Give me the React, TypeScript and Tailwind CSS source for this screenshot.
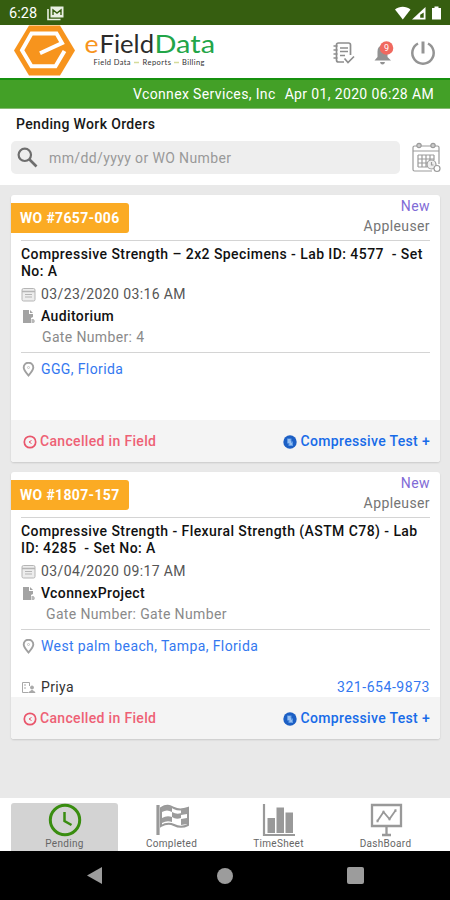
import type { ReactNode } from 'react'
import clsx from 'clsx'

type WorkOrder = {
  number: string
  status: string
  user: string
  title: string[]
  date: string
  project: string
  gate: string
  gateIndent: string
  address: string
  contact?: { name: string; phone: string }
}

const orders: WorkOrder[] = [
  {
    number: 'WO #7657-006',
    status: 'New',
    user: 'Appleuser',
    title: ['Compressive Strength – 2x2 Specimens - Lab ID: 4577  - Set', 'No: A'],
    date: '03/23/2020 03:16 AM',
    project: 'Auditorium',
    gate: 'Gate Number: 4',
    gateIndent: 'pl-[21px]',
    address: 'GGG, Florida',
  },
  {
    number: 'WO #1807-157',
    status: 'New',
    user: 'Appleuser',
    title: ['Compressive Strength - Flexural Strength (ASTM C78) - Lab', 'ID: 4285  - Set No: A'],
    date: '03/04/2020 09:17 AM',
    project: 'VconnexProject',
    gate: 'Gate Number: Gate Number',
    gateIndent: 'pl-[25px]',
    address: 'West palm beach, Tampa, Florida',
    contact: { name: 'Priya', phone: '321-654-9873' },
  },
]

export default function App() {
  return (
    <div className="flex h-[900px] w-[450px] flex-col overflow-hidden bg-[#e9e9e9] font-['Roboto',sans-serif] text-[14px]">
      <StatusBar />
      <Header />
      <div className="flex h-[30px] items-center justify-end gap-[9px] border-t-2 border-[#16910f] bg-[#43a027] pr-4 tracking-[0.36px] text-white">
        <span>Vconnex Services, Inc</span>
        <span>Apr 01, 2020 06:28 AM</span>
      </div>
      <Search />
      <main className="flex flex-1 flex-col gap-[10px] pl-[11px] pr-[10px] pt-[10px]">
        {orders.map((o) => <OrderCard key={o.number} order={o} />)}
      </main>
      <TabBar />
      <SystemNav />
    </div>
  )
}

function StatusBar() {
  return (
    <div className="flex h-[25px] items-center bg-[#365e10] pl-[9px] pr-[7px] text-white">
      <span className="pt-[3px] text-[14.5px] leading-none tracking-[0.1px]">6:28</span>
      <svg width="18" height="16" viewBox="0 0 18 16" className="ml-[10px] mt-px">
        <path d="M3.5 1.5h13v11h-13z" fill="#e9efe2" />
        <path d="M1 4v10.500h12.500" fill="none" stroke="#e9efe2" strokeWidth="1.600" />
        <path d="M6 10V5l4 3 4-3v5" fill="none" stroke="#365e10" strokeWidth="1.400" />
      </svg>
      <svg width="49" height="16" viewBox="0 0 49 16" className="ml-auto mt-px">
        <path d="M1 4.500C5.500 0.800 12 0.800 16.500 4.500L8.800 14.500z" fill="#fff" />
        <path d="M31.500 2v12.500H18z" fill="#fff" />
        <path d="M29.700 7.500v5.300h-3.500v-3z" fill="#365e10" />
        <path d="M38 3h2.500V1.500h4V3H47v11.500h-9z" fill="#fff" />
      </svg>
    </div>
  )
}

function Header() {
  return (
    <header className="flex h-[53px] items-start bg-white pl-[13px] pr-[14px]">
      <svg width="204" height="53" viewBox="13 25 204 53">
        <path d="M29 25.500H60L75 50.500L60 75.500H29L14 50.500z" fill="#f7941d" />
        <path d="M40 53.300L62 43L56.500 33.500H31.500L22 50.300L31.500 66.300H55.500L64.500 51" fill="none" stroke="#fff" strokeWidth="4" />
        <g fontFamily="Lato" fontSize="25.500">
          <text x="84.500" y="53" fill="#f7941d" textLength="14" lengthAdjust="spacingAndGlyphs">e</text>
          <text x="99.500" y="53" fill="#2b2b2b" textLength="54.500" lengthAdjust="spacingAndGlyphs">Field</text>
          <text x="154.500" y="53" fill="#22a548" textLength="60.500" lengthAdjust="spacingAndGlyphs">Data</text>
        </g>
        <g fontFamily="Lato" fontSize="7.500" fill="#333">
          <text x="93.500" y="65" textLength="37">Field Data</text>
          <text x="142.500" y="65" textLength="28.500">Reports</text>
          <text x="182" y="65" textLength="22.500">Billing</text>
        </g>
        <path d="M134 62.500h5M174 62.500h5" stroke="#d5dc9a" strokeWidth="1.300" />
      </svg>
      <div className="ml-auto flex pt-[14px]">
        <svg width="24" height="26" viewBox="0 0 24 26" fill="none" stroke="#8e8e8e" strokeWidth="1.700">
          <path d="M18.500 16V6q0-2-2-2H6.500q-2 0-2 2v15q0 2 2 2H12" />
          <path d="M1.500 7h4M1.500 11h4M1.500 15h4M1.500 19h4" strokeWidth="1.300" />
          <path d="M8 9h8M8 12.500h8M8 16.500h5M12.500 19.500l3.500 4 6-6" />
        </svg>
        <svg width="22" height="27" viewBox="0 0 22 27" className="ml-[17px]">
          <path d="M1.500 21.500l3-3.500v-5.500q0-5.500 5-6.500 4.500 1 5 6.500V18l3.500 3.500z" fill="#929292" />
          <path d="M7 23h5q-.5 2.500-2.500 2.500T7 23z" fill="#929292" />
          <circle cx="13.500" cy="9" r="6.800" fill="#f0695f" />
          <text x="13.500" y="12.200" textAnchor="middle" fontSize="9" fontFamily="Roboto" fill="#fff">9</text>
        </svg>
        <svg width="26" height="28" viewBox="0 0 26 28" fill="none" stroke="#949494" strokeWidth="2.500" className="ml-[15px]">
          <path d="M8 4.500a10.700 10.700 0 1 0 10 0" />
          <path d="M13 2.500v12" strokeWidth="3" />
        </svg>
      </div>
    </header>
  )
}

function Search() {
  return (
    <section className="h-[77px] border-t border-[#86bb73] bg-white pl-[11px] pr-[9px]">
      <h1 className="mt-[5px] pl-[5px] text-[14px] font-medium leading-5 tracking-[0.35px] text-[#181818]">Pending Work Orders</h1>
      <div className="mt-[7px] flex items-center justify-between">
        <label className="flex h-[33px] w-[389px] items-center rounded-[5px] bg-[#eeeeee] pl-[6px]">
          <svg width="21" height="21" viewBox="0 0 21 21" fill="none" stroke="#6e6e6e" strokeWidth="2.200">
            <circle cx="7.800" cy="7.800" r="6.200" />
            <path d="M12.500 12.500l7 7" strokeWidth="2.600" />
          </svg>
          <span className="ml-[11px] pt-[2px] tracking-[0.38px] text-[#999]">mm/dd/yyyy or WO Number</span>
        </label>
        <svg width="30" height="31" viewBox="0 0 30 31" fill="none" stroke="#9b9b9b" strokeWidth="1.200">
          <path d="M28 22V5.500Q28 4 26.500 4h-23Q2 4 2 5.500v22Q2 29 3.500 29H21M2 9h26" />
          <circle cx="8" cy="3.500" r="2.200" fill="#ccc" />
          <circle cx="22" cy="3.500" r="2.200" fill="#ccc" />
          <path d="M7 13h16M7 17h16M7 21h10M7 25h9M7 13v12M11 13v12M15 13v12M19 13v5M23 13v5" />
          <circle cx="20.500" cy="22.500" r="4.500" fill="#eee" />
          <path d="M20.500 20v3h2" />
          <circle cx="26" cy="26.500" r="3" fill="#fff" />
        </svg>
      </div>
    </section>
  )
}

function OrderCard({ order }: { order: WorkOrder }) {
  return (
    <article className="flex h-[267px] flex-col rounded-[3px] bg-white shadow-[0_1px_2px_rgba(0,0,0,0.14)]">
      <div className="flex h-[45px] justify-between pr-[10px]">
        <span className="mt-2 flex h-[30px] w-[118px] items-center rounded-r-[3px] bg-[#fbab24] pl-[9px] pt-px font-bold tracking-[0.35px] text-white">
          {order.number}
        </span>
        <div className="pt-px text-right leading-[20px] tracking-[0.4px]">
          <p className="text-[#7f6bd6]">{order.status}</p>
          <p className="text-[#757575]">{order.user}</p>
        </div>
      </div>
      <div className="mx-[10px] border-t border-[#d4d4d4]" />
      <div className="px-[10px]">
        <div className="whitespace-pre pt-[5px] font-medium leading-[17px] tracking-[0.43px] text-[#111]">
          {order.title.map((line) => <p key={line}>{line}</p>)}
        </div>
        <Row icon={<CalendarIcon />} className="mt-[4px] text-[#555]">{order.date}</Row>
        <Row icon={<ProjectIcon />} className="font-medium text-[#111]">{order.project}</Row>
        <p className={clsx('leading-[21.5px] tracking-[0.36px] text-[#8a8a8a]', order.gateIndent)}>{order.gate}</p>
      </div>
      <div className="mx-[10px] mt-[3px] border-t border-[#d4d4d4]" />
      <div className="px-[10px] pt-[6px]">
        <Row icon={<PinIcon />} className="text-[#3478f0]">{order.address}</Row>
      </div>
      {order.contact && (
        <div className="mt-auto flex h-[19px] items-center justify-between px-[10px]">
          <Row icon={<ContactIcon />} className="text-[#333]">{order.contact.name}</Row>
          <span className="tracking-[0.55px] text-[#3478f0]">{order.contact.phone}</span>
        </div>
      )}
      <footer className={clsx('flex h-[42px] items-center justify-between rounded-b-[3px] bg-[#f4f4f4] pl-3 pr-[10px] pt-px font-medium tracking-[0.33px]', !order.contact && 'mt-auto')}>
        <span className="flex items-center gap-[3px] text-[#ee6175]">
          <svg width="14" height="14" viewBox="0 0 14 14" fill="none" stroke="#e9556b" strokeWidth="1.700">
            <circle cx="7" cy="7" r="5.700" />
            <path d="M8.500 5.500L6 7l2.500 1.500" strokeWidth="1" />
          </svg>
          Cancelled in Field
        </span>
        <span className="flex items-center gap-[4px] text-[#176be8]">
          <svg width="14" height="14" viewBox="0 0 14 14">
            <circle cx="7" cy="7" r="6.700" fill="#1c5fc4" />
            <path d="M4 3.500h4.500v3H10V11H5.500V8.500H4z" fill="#5f9be6" />
            <path d="M5 5h2.500M5 7h3M6.500 9h2.500" stroke="#cfe2fb" />
          </svg>
          Compressive Test +
        </span>
      </footer>
    </article>
  )
}

function Row({ icon, className, children }: { icon: ReactNode; className: string; children: ReactNode }) {
  return (
    <div className={clsx('flex h-[21.5px] items-center gap-[5px] tracking-[0.38px]', className)}>
      {icon}
      <span>{children}</span>
    </div>
  )
}

function CalendarIcon() {
  return (
    <svg width="15" height="15" viewBox="0 0 15 15" fill="none" stroke="#b5b5b5">
      <rect x="1" y="1.500" width="13" height="12.500" rx="1.500" fill="#ededed" />
      <path d="M1 4.500h13" strokeWidth="1.500" />
      <path d="M4 7.500h7M4 10h7" />
    </svg>
  )
}

function ProjectIcon() {
  return (
    <svg width="15" height="15" viewBox="0 0 15 15" fill="#a3a3a3">
      <path d="M2 1h6v4h4v3l-2 1v5H2z" />
      <path d="M9 1l3 3H9z" />
      <path d="M10.500 10h2l1.500 2-1 2h-2.500z" fill="#b8b8b8" />
    </svg>
  )
}

function PinIcon() {
  return (
    <svg width="15" height="15" viewBox="0 0 15 15" fill="none" stroke="#a0a0a0" strokeWidth="1.900">
      <path d="M7.500 13.500C4.500 10 2.700 8 2.700 5.500a4.800 4.800 0 0 1 9.600 0C12.300 8 10.500 10 7.500 13.500z" />
      <circle cx="7.500" cy="5.500" r="1" strokeWidth="1" stroke="#c4c4c4" />
    </svg>
  )
}

function ContactIcon() {
  return (
    <svg width="15" height="13" viewBox="0 0 15 13" fill="none" stroke="#a8a8a8">
      <path d="M7.500 11.500h-6v-10h7V5" />
      <path d="M3 4h2M3 7h2" />
      <circle cx="11" cy="6.500" r="1.500" fill="#a8a8a8" />
      <path d="M8 11.500q3-4 6 0z" fill="#a8a8a8" />
    </svg>
  )
}

function TabBar() {
  return (
    <nav className="flex h-[53px] bg-white px-[11px] pt-[5px]">
      <Tab label="Pending" active>
        <circle cx="17" cy="17" r="14.700" stroke="#398d10" strokeWidth="3" />
        <path d="M16.500 9v9l7 4" stroke="#398d10" strokeWidth="2.500" />
      </Tab>
      <Tab label="Completed">
        <path d="M3 2v30" strokeWidth="3.200" />
        <path d="M6 5c6-4 9-2 13 0s8 2 14 0v17c-6 3-10 2-14 0s-8-2-13 1z" strokeWidth="2" />
        <path d="M7 5q5-4 10-1v5q-5-3-10 0zM17 9q5 3 9 1v5q-5 2-9-1zM7 15q5-3 10-1v5q-5-2-10 1zM26 6l6-1v6l-6 1zM26 16l6-1v6l-6 1z" fill="#9c9c9c" stroke="none" />
      </Tab>
      <Tab label="TimeSheet">
        <path d="M2 1v31h31" strokeWidth="2.200" />
        <path d="M5.500 15h7.500v15H5.500zM14.500 4.500H22V30h-7.500zM23.500 9.500H31V30h-7.500z" fill="#999" stroke="none" />
      </Tab>
      <Tab label="DashBoard">
        <path d="M3 2h29v21H3zM17.500 23v9M13 32h9" strokeWidth="2.300" />
        <path d="M8.500 18l6-9 6 7 6-8.500" strokeWidth="1.800" />
        <path d="M7.500 18h2M25.500 7.500h2M13.500 9h2M19.500 16h2" strokeWidth="2.500" />
      </Tab>
    </nav>
  )
}

function Tab({ label, active, children }: { label: string; active?: boolean; children: ReactNode }) {
  return (
    <div className={clsx('flex h-[48px] w-[107px] flex-col items-center rounded-t-[3px]', active && 'bg-[#d3d3d3]')}>
      <svg width="34" height="34" viewBox="0 0 34 34" fill="none" stroke="#999">{children}</svg>
      <span className="mt-[2px] text-[10px] leading-[10px] tracking-[0.3px] text-[#666]">{label}</span>
    </div>
  )
}

function SystemNav() {
  return (
    <div className="flex h-[49px] items-center justify-between bg-black px-[86px]">
      <svg width="17" height="19" viewBox="0 0 17 19"><path d="M16 1v17L1 9.500z" fill="#9c9c9c" /></svg>
      <div className="size-[16px] rounded-full bg-[#9c9c9c]" />
      <div className="size-[17px] rounded-[2px] bg-[#9c9c9c]" />
    </div>
  )
}
